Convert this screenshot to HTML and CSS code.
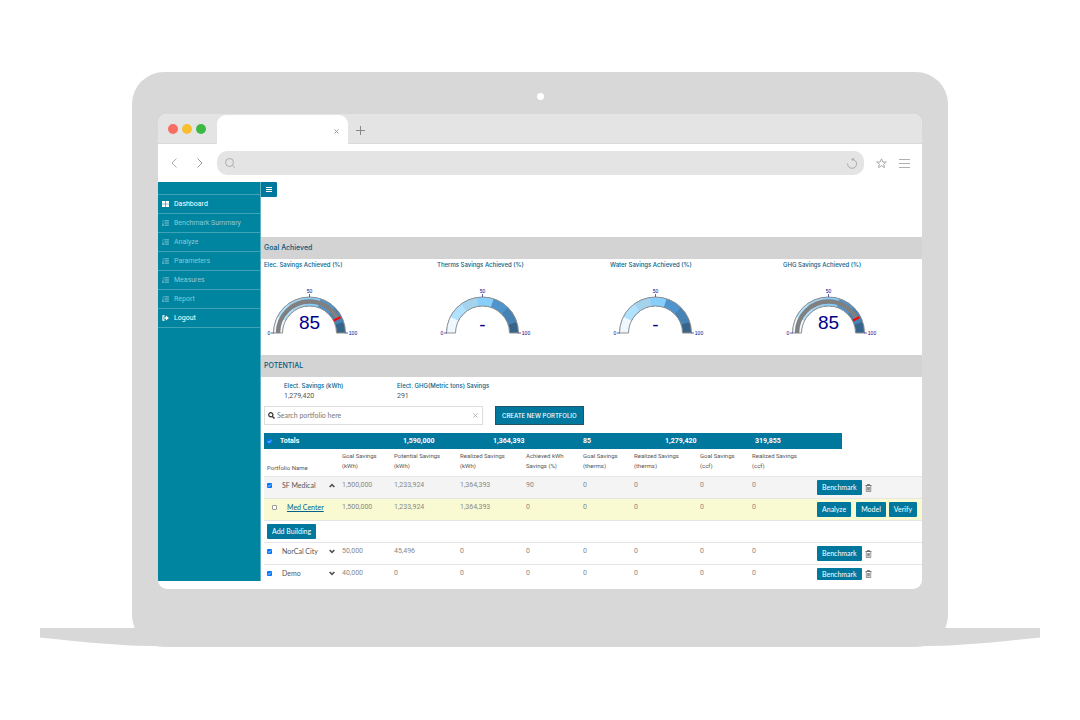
FILE: index.html
```html
<!DOCTYPE html>
<html lang="en">
<head>
<meta charset="utf-8">
<title>Dashboard</title>
<link rel="stylesheet" href="styles.css">
</head>
<body>
<svg class="defs" aria-hidden="true">
  <symbol id="list" viewBox="0 0 8 7"><path d="M3 1h5M3 3.500h5M3 6h5" stroke="currentColor" stroke-width="1.100"/><path d="M0 .9l.8.8L2.200.2M0 3.400l.8.8L2.200 2.700M.3 5.400h1.500v1.300H.3z" stroke="currentColor" stroke-width=".8" fill="none"/></symbol>
  <symbol id="trash" viewBox="0 0 14 16"><path d="M1 3h12M5 3V1h4v2" stroke="currentColor" stroke-width="1.600" fill="none"/><path d="M2.500 4v11h9V4M5.200 6v7M7 6v7M8.800 6v7" stroke="currentColor" stroke-width="1.200" fill="none"/></symbol>
  <symbol id="up" viewBox="0 0 10 8"><path d="M1 6.500L5 2.500L9 6.500" stroke="currentColor" stroke-width="2.800" fill="none"/></symbol>
  <symbol id="down" viewBox="0 0 10 8"><path d="M1 1.500L5 5.500L9 1.500" stroke="currentColor" stroke-width="2.800" fill="none"/></symbol>
  <symbol id="dial" viewBox="0 0 96 52">
    <g fill="none" stroke-width="9">
      <path pathLength="100" d="M14 47A31.500 31.500 0 0 1 77 47" stroke="#36648b"/>
      <path pathLength="100" d="M14 47A31.500 31.500 0 0 1 77 47" stroke="#4682b4" stroke-dasharray="90 200"/>
      <path pathLength="100" d="M14 47A31.500 31.500 0 0 1 77 47" stroke="#4f94cd" stroke-dasharray="75 200"/>
      <path pathLength="100" d="M14 47A31.500 31.500 0 0 1 77 47" stroke="#87cefa" stroke-dasharray="60 200"/>
      <path pathLength="100" d="M14 47A31.500 31.500 0 0 1 77 47" stroke="#a4d3ee" stroke-dasharray="45 200"/>
      <path pathLength="100" d="M14 47A31.500 31.500 0 0 1 77 47" stroke="#b0e2ff" stroke-dasharray="30 200"/>
      <path pathLength="100" d="M14 47A31.500 31.500 0 0 1 77 47" stroke="#f0f8ff" stroke-dasharray="15 200"/>
    </g>
    <path d="M9.500 47A36 36 0 0 1 81.500 47H72.500A27 27 0 0 0 18.500 47Z" fill="none" stroke="#909090"/>
    <path d="M45.500 8v3M7 47h3M81 47h3" stroke="#3a3a9c" stroke-width=".8"/>
  </symbol>
  <symbol id="needle" viewBox="0 0 96 52">
    <path pathLength="100" d="M14 47A31.500 31.500 0 0 1 77 47" fill="none" stroke="#808080" stroke-width="4.500" stroke-dasharray="85 200"/>
    <path d="M70 34.500L76.500 31.200" stroke="#f00" stroke-width="2"/>
  </symbol>
</svg>

<div class="laptop">
  <div class="lid">
    <div class="camera"></div>
    <div class="screen">
      <div class="tabbar">
        <div class="dots"><i class="red"></i><i class="yellow"></i><i class="green"></i></div>
        <div class="tab"><button class="plain" aria-label="Close tab"><svg width="5" height="5" viewBox="0 0 5 5"><path d="M.5 .5l4 4M4.500 .5l-4 4" stroke="#999"/></svg></button></div>
        <button class="plain plus" aria-label="New tab"><svg width="9" height="9" viewBox="0 0 9 9"><path d="M4.500 0v9M0 4.500h9" stroke="#888"/></svg></button>
      </div>
      <div class="toolbar">
        <button class="plain" aria-label="Back"><svg width="6" height="10" viewBox="0 0 6 10"><path d="M5.500 .5L1 5l4.500 4.500" fill="none" stroke="#aaa"/></svg></button>
        <button class="plain" aria-label="Forward"><svg width="6" height="10" viewBox="0 0 6 10"><path d="M.5 .5L5 5L.5 9.500" fill="none" stroke="#999"/></svg></button>
        <div class="address">
          <svg width="10" height="10" viewBox="0 0 10 10"><circle cx="4.500" cy="4.500" r="4" fill="none" stroke="#aaa"/><path d="M7.500 7.500L9.800 9.800" stroke="#aaa"/></svg>
          <input aria-label="Address">
          <button class="plain" aria-label="Reload"><svg width="10" height="11" viewBox="0 0 10 11"><path d="M.6 5.500A4.500 4.500 0 1 0 5 1.300M6.800.4L4.800 1.300l1.600 1.700" fill="none" stroke="#aaa"/></svg></button>
        </div>
        <button class="plain" aria-label="Bookmark"><svg width="11" height="11" viewBox="0 0 11 11"><path d="M5.500 .8L6.900 4h3.400L7.600 6.200l.9 3.500-3-2-3 2 .9-3.500L.7 4h3.400z" fill="none" stroke="#aaa"/></svg></button>
        <button class="plain" aria-label="Menu"><svg width="11" height="9" viewBox="0 0 11 9"><path d="M0 .5h11M0 4.500h11M0 8.500h11" stroke="#b0b0b0"/></svg></button>
      </div>

      <div class="app">
        <nav class="side">
          <a class="on" href="#"><svg width="7" height="6" viewBox="0 0 7 6"><path d="M0 0h3.200v2.700H0zM3.800 0H7v2.700H3.800zM0 3.300h3.200V6H0zM3.800 3.300H7V6H3.800z" fill="#fff"/></svg>Dashboard</a>
          <a href="#"><svg width="7" height="6"><use href="#list"/></svg>Benchmark Summary</a>
          <a href="#"><svg width="7" height="6"><use href="#list"/></svg>Analyze</a>
          <a href="#"><svg width="7" height="6"><use href="#list"/></svg>Parameters</a>
          <a href="#"><svg width="7" height="6"><use href="#list"/></svg>Measures</a>
          <a href="#"><svg width="7" height="6"><use href="#list"/></svg>Report</a>
          <a class="on" href="#"><svg width="7" height="6" viewBox="0 0 16 14"><path d="M6 2H2v10h4" fill="none" stroke="#fff" stroke-width="2.600"/><path d="M5 5h4V1l7 6-7 6V9H5z" fill="#fff"/></svg>Logout</a>
        </nav>
        <main>
          <button class="toggle" aria-label="Toggle menu"><svg width="6" height="5" viewBox="0 0 6 5"><path d="M0 .5h6M0 2.500h6M0 4.500h6" stroke="#fff"/></svg></button>
          <h2 class="band">Goal Achieved</h2>
          <section class="gauges">
            <div class="gauge"><h3>Elec. Savings Achieved (%)</h3><svg width="96" height="52"><use href="#dial"/><use href="#needle"/><text x="45.500" y="7" class="tick">50</text><text x="5" y="49" class="tick">0</text><text x="89" y="49" class="tick">100</text><text x="45.500" y="43" class="val">85</text></svg></div>
            <div class="gauge"><h3>Therms Savings Achieved (%)</h3><svg width="96" height="52"><use href="#dial"/><text x="45.500" y="7" class="tick">50</text><text x="5" y="49" class="tick">0</text><text x="89" y="49" class="tick">100</text><text x="45.500" y="45" class="val">-</text></svg></div>
            <div class="gauge"><h3>Water Savings Achieved (%)</h3><svg width="96" height="52"><use href="#dial"/><text x="45.500" y="7" class="tick">50</text><text x="5" y="49" class="tick">0</text><text x="89" y="49" class="tick">100</text><text x="45.500" y="45" class="val">-</text></svg></div>
            <div class="gauge"><h3>GHG Savings Achieved (%)</h3><svg width="96" height="52"><use href="#dial"/><use href="#needle"/><text x="45.500" y="7" class="tick">50</text><text x="5" y="49" class="tick">0</text><text x="89" y="49" class="tick">100</text><text x="45.500" y="43" class="val">85</text></svg></div>
          </section>
          <h2 class="band">POTENTIAL</h2>
          <dl class="stats">
            <div><dt>Elect. Savings (kWh)</dt><dd>1,279,420</dd></div>
            <div><dt>Elect. GHG(Metric tons) Savings</dt><dd>291</dd></div>
          </dl>
          <div class="actions">
            <div class="search">
              <svg width="7" height="7" viewBox="0 0 7 7"><circle cx="2.800" cy="2.800" r="2.100" fill="none" stroke="#333" stroke-width="1.200"/><path d="M4.400 4.400L6.500 6.500" stroke="#333" stroke-width="1.400"/></svg>
              <input placeholder="Search portfolio here" aria-label="Search portfolio here">
              <button class="plain" aria-label="Clear"><svg width="5" height="5" viewBox="0 0 5 5"><path d="M.3 .3l4.400 4.400M4.700 .3L.3 4.700" stroke="#aaa" stroke-width=".8"/></svg></button>
            </div>
            <button class="create">CREATE NEW PORTFOLIO</button>
          </div>
          <table class="totals">
            <colgroup><col class="t1"><col class="t2"><col class="t2"><col class="t3"><col class="t2"><col></colgroup>
            <tr><th><label><input type="checkbox" checked>Totals</label></th><td>1,590,000</td><td>1,364,393</td><td>85</td><td>1,279,420</td><td>319,855</td></tr>
          </table>
          <table class="grid">
            <colgroup><col class="c1"><col class="c2"><col class="c3"><col class="c3"><col class="c4"><col class="c5"><col class="c3"><col class="c2"><col class="c6"><col></colgroup>
            <thead><tr><th class="pn">Portfolio Name</th><th>Goal Savings<br>(kWh)</th><th>Potential Savings<br>(kWh)</th><th>Realized Savings<br>(kWh)</th><th>Achieved kWh<br>Savings (%)</th><th>Goal Savings<br>(therms)</th><th>Realized Savings<br>(therms)</th><th>Goal Savings<br>(ccf)</th><th>Realized Savings<br>(ccf)</th><th></th></tr></thead>
            <tbody>
              <tr class="shade"><td><div class="name"><label><input type="checkbox" checked>SF Medical</label><svg width="6" height="5"><use href="#up"/></svg></div></td><td>1,500,000</td><td>1,233,924</td><td>1,364,393</td><td>90</td><td>0</td><td>0</td><td>0</td><td>0</td><td class="ops"><div><button class="btn">Benchmark</button><button class="plain" aria-label="Delete"><svg width="7" height="8"><use href="#trash"/></svg></button></div></td></tr>
              <tr class="pick"><td><div class="name sub"><input type="checkbox" aria-label="Med Center"><a href="#">Med Center</a></div></td><td>1,500,000</td><td>1,233,924</td><td>1,364,393</td><td>0</td><td>0</td><td>0</td><td>0</td><td>0</td><td class="ops"><div><button class="btn gapped">Analyze</button><button class="btn">Model</button><button class="btn">Verify</button></div></td></tr>
              <tr><td colspan="10" class="ops"><div><button class="btn">Add Building</button></div></td></tr>
              <tr><td><div class="name"><label><input type="checkbox" checked>NorCal City</label><svg width="6" height="5"><use href="#down"/></svg></div></td><td>50,000</td><td>45,496</td><td>0</td><td>0</td><td>0</td><td>0</td><td>0</td><td>0</td><td class="ops"><div><button class="btn">Benchmark</button><button class="plain" aria-label="Delete"><svg width="7" height="8"><use href="#trash"/></svg></button></div></td></tr>
              <tr class="last"><td><div class="name"><label><input type="checkbox" checked>Demo</label><svg width="6" height="5"><use href="#down"/></svg></div></td><td>40,000</td><td>0</td><td>0</td><td>0</td><td>0</td><td>0</td><td>0</td><td>0</td><td class="ops"><div><button class="btn">Benchmark</button><button class="plain" aria-label="Delete"><svg width="7" height="8"><use href="#trash"/></svg></button></div></td></tr>
            </tbody>
          </table>
        </main>
      </div>
    </div>
  </div>
  <div class="foot"></div>
</div>
</body>
</html>
```

FILE: styles.css
```css
* { box-sizing: border-box; }
body { margin: 0; background: #fff; font: 7px/9px Roboto, "Liberation Sans", sans-serif; color: #555; }
h2, h3, dl, dd { margin: 0; }
button, input { font: inherit; margin: 0; }
svg { display: block; flex: none; }
.defs { position: absolute; width: 0; height: 0; }
.plain { border: 0; padding: 0; background: none; color: #555; }

.laptop { padding: 72px 40px; }
.lid { margin: 0 92px; padding: 21px 26px 58px; background: #d8d8d8; border-radius: 32px; }
.camera { width: 7px; height: 7px; margin: 0 auto 14px; border-radius: 50%; background: #fff; }
.foot { height: 19px; margin-top: -19px; background: #d8d8d8;
  clip-path: polygon(0 0, 100% 0, 100% 10px, calc(100% - 48px) 15px, calc(100% - 90px) 18px, calc(100% - 130px) 19px, 130px 19px, 90px 18px, 48px 15px, 0 10px); }

.screen { background: #fff; border-radius: 9px; overflow: hidden; padding-bottom: 8px; }
.tabbar { display: flex; height: 30px; background: #e4e4e4; border-bottom: 1px solid #dadada; }
.dots { display: flex; gap: 4px; padding: 10px 10px 0; width: 59px; }
.dots i { width: 10px; height: 10px; border-radius: 50%; flex: none; }
.red { background: #f76d62; }
.yellow { background: #f8c02f; }
.green { background: #3cb944; }
.tab { display: flex; justify-content: flex-end; align-items: center; width: 131px; height: 29px; margin-top: 1px; padding: 3px 9px 0; background: #fff; border-radius: 9px 9px 0 0; }
.plus { align-self: center; margin: 3px 0 0 8px; }
.toolbar { display: flex; align-items: center; gap: 12px; height: 38px; padding: 0 12px 0 13px; }
.toolbar > .plain:nth-child(2) { margin: 0 2px 0 8px; }
.address { flex: 1; display: flex; align-items: center; height: 24px; padding: 0 7px 0 8px; border-radius: 10px; background: #e4e4e4; }
.address input { flex: 1; min-width: 0; border: 0; background: none; height: 16px; }

.app { display: flex; }
.side { width: 103px; padding-top: 12px; background: #0085a1; border-right: 1px solid #5db1c2; }
.side a { display: flex; align-items: center; gap: 5px; height: 19px; padding-left: 4px; border-top: 1px solid #3fa3b8; color: #8cc7d4; text-decoration: none; }
.side a:last-child { height: 20px; border-bottom: 1px solid #3fa3b8; }
.side .on { color: #fff; }
main { flex: 1; min-width: 0; font-family: Lato, Roboto, sans-serif; }
.toggle { display: flex; align-items: center; justify-content: center; width: 16px; height: 15px; padding: 0; margin-bottom: 40px; border: 0; border-radius: 0 1px 1px 0; background: #00789e; }
.band { padding: 6px 3px 7px; background: #d3d3d3; color: #005a7d; font: 500 7px/9px Inter, sans-serif; }
.gauges { display: grid; grid-template-columns: repeat(4, 173px); padding: 1px 0 17px 3px; }
.gauge h3 { margin-bottom: 17px; font: 500 6px/9px Inter, sans-serif; color: #00628a; }
.tick { font: 5px "Liberation Sans", sans-serif; fill: #00008b; text-anchor: middle; }
.val { font: 19px "Liberation Sans", sans-serif; fill: #00008b; text-anchor: middle; }

.stats { display: flex; padding: 4px 0 5px 23px; }
.stats div { width: 113px; white-space: nowrap; }
.stats dt { margin-bottom: 2px; color: #006288; font: 500 6px/9px Inter, sans-serif; }
.stats dd { font-family: Roboto, sans-serif; }
.actions { display: flex; gap: 12px; padding-left: 3px; }
.search { display: flex; align-items: center; gap: 2px; width: 219px; height: 19px; padding: 0 4px 0 3px; border: 1px solid #ddd; }
.search input { flex: 1; min-width: 0; padding: 0; border: 0; outline: 0; }
.search input::placeholder { color: #777; }
.create { height: 19px; padding: 0 6px; background: #00789e; border: 1px solid #24536a; color: #fff; font: 500 6px/9px Inter, sans-serif; white-space: nowrap; }

table { border-collapse: collapse; table-layout: fixed; }
th, td { padding: 0; text-align: left; }
input[type="checkbox"] { appearance: none; width: 5px; height: 5px; flex: none; border: 1px solid #999; border-radius: 1px; background: #fff; }
input[type="checkbox"]:checked { border: 0; background: #0075ff url("data:image/svg+xml,%3Csvg xmlns='http://www.w3.org/2000/svg' viewBox='0 0 10 10'%3E%3Cpath d='M2 5l2 2 4-4' fill='none' stroke='white' stroke-width='1.500'/%3E%3C/svg%3E"); }
label { display: flex; align-items: center; }
.totals { width: 578px; margin: 8px 0 0 3px; background: #00789e; color: #fff; font-family: Roboto, sans-serif; font-weight: 700; }
.totals th, .totals td { height: 16px; }
.totals label { gap: 8px; padding-left: 3px; }
.t1 { width: 139px; }
.t2 { width: 90px; }
.t3 { width: 82px; }
.grid { width: calc(100% - 3px); margin-left: 3px; color: #888; }
.c1 { width: 75px; }
.c2 { width: 52px; }
.c3 { width: 66px; }
.c4 { width: 57px; }
.c5 { width: 51px; }
.c6 { width: 65px; }
.grid th { height: 27px; padding: 2px 0 5px 3px; color: #555; font: 6px/10px Roboto, sans-serif; vertical-align: top; white-space: nowrap; }
.grid .pn { vertical-align: bottom; padding-bottom: 3px; }
.grid td { height: 22px; padding: 4px 0 0 3px; border-top: 1px solid #e5e5e5; vertical-align: top; white-space: nowrap; font-family: Roboto, sans-serif; }
.grid .ops { padding-top: 3px; }
.ops div { display: flex; align-items: center; gap: 3px; }
.shade { background: #f4f4f4; }
.pick { background: #fafad2; }
.name { display: flex; align-items: center; justify-content: space-between; padding-right: 4px; color: #555; font-family: Lato, Roboto, sans-serif; }
.name label { gap: 10px; }
.name.sub { justify-content: flex-start; gap: 10px; padding-left: 5px; }
.name a { color: #00628a; }
.btn { height: 15px; padding: 0 5px; border: 0; border-radius: 1px; background: #00789e; color: #fff; font-family: Lato, Roboto, sans-serif; }
.gapped { margin-right: 2px; }
.last td { height: 16px; }
.last .btn { height: 12px; }
```
